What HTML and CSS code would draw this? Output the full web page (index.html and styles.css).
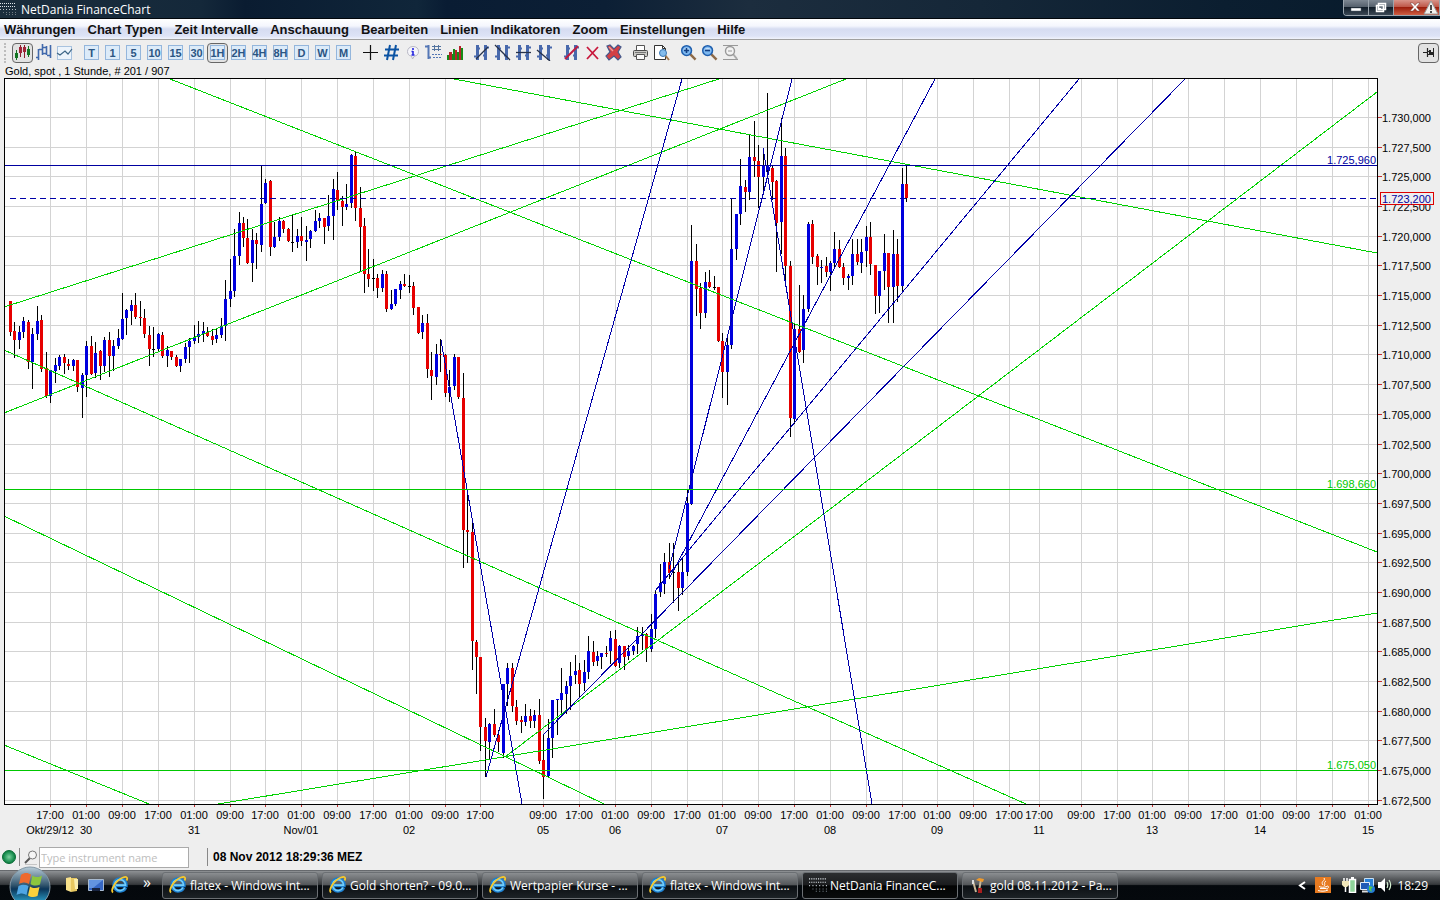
FILE: index.html
```html
<!DOCTYPE html>
<html lang="de">
  <head>
    <meta charset="UTF-8" />
    <meta name="viewport" content="width=device-width, initial-scale=1.0" />
    <title>NetDania FinanceChart</title>
    <link rel="stylesheet" href="styles.css">
  </head>
  <body>
    <!-- shared symbols -->
    <svg class="symbols" aria-hidden="true">
      <defs>
        <linearGradient id="orb-fill" x1="0" y1="0" x2="0" y2="1">
          <stop offset="0" stop-color="#b9cdd9" />
          <stop offset=".45" stop-color="#33566e" />
          <stop offset=".55" stop-color="#0b3558" />
          <stop offset="1" stop-color="#37c3ee" />
        </linearGradient>
        <radialGradient id="led-fill">
          <stop offset="0" stop-color="#7fd0a0" />
          <stop offset=".6" stop-color="#2f9f62" />
          <stop offset="1" stop-color="#08783c" />
        </radialGradient>
      </defs>
      <symbol id="dots" viewBox="0 0 16 14">
        <path d="M0 1.500h16M0 4.500h16" stroke="#dfe5ea" stroke-dasharray="1 1" />
        <path d="M0 7.500h16" stroke="#b8c0c6" stroke-dasharray="1 2" />
        <path d="M3 10.500h13M6 12.500h10" stroke="#707a82" stroke-dasharray="1 2" />
      </symbol>
      <symbol id="ie" viewBox="0 0 18 18">
        <path d="M14.500 11.500A6 6 0 1 1 15 8.500v1H5" fill="none" stroke="#1c7fcf" stroke-width="3.400" />
        <path d="M14 11.500A5.500 5.500 0 1 1 14.500 8.500v.6H5" fill="none" stroke="#74cdf8" stroke-width="1.600" />
        <path d="M2 16.500C-1 14 5 4 12 1.500c4-1.500 5 .5 3.500 3" fill="none" stroke="#f6c92c" stroke-width="1.800" />
      </symbol>
      <symbol id="lens" viewBox="0 0 18 18">
        <path d="M10.500 10.500l6 6" stroke="#8d6a48" stroke-width="2.600" />
        <circle cx="7" cy="7" r="5.200" fill="#7db8f0" stroke="#1f5fae" stroke-width="1.600" />
        <path d="M3.500 6a4 4 0 0 1 7 0z" fill="#c3e0fb" />
      </symbol>
      <symbol id="bars" viewBox="0 0 17 17">
        <path d="M4.500 1v15M12.500 1v15" stroke="#4869ac" stroke-width="3" />
        <path d="M1 12.500h4M4 4.500h3M10 11.500h3M12 3.500h4" stroke="#4869ac" stroke-width="2" />
      </symbol>
    </svg>

    <header class="titlebar">
      <svg class="title-icon"><use href="#dots" /></svg>
      <h1>NetDania FinanceChart</h1>
      <div class="window-buttons">
        <button aria-label="Minimieren"><svg viewBox="0 0 24 15"><path d="M7 8h10v3H7z" fill="#fff" stroke="#56616d" stroke-width=".5" /></svg></button>
        <button aria-label="Verkleinern"><svg viewBox="0 0 24 15"><path d="M9.500 3.500h7v6h-7zM7.500 5.500h7v6h-7z" fill="#69747f" stroke="#fff" stroke-width="1.500" /><path d="M10 8h2v1h-2z" fill="#fff" /></svg></button>
        <button class="close-but" aria-label="Schließen"><svg viewBox="0 0 45 15"><path d="M16 3h3l2 2.500L23 3h3l-3.500 4 3.500 4h-3l-2-2.500L19 11h-3l3.500-4z" fill="#fff" stroke="#6c3730" stroke-width=".5" /><path d="M37 1l7 13H30z" fill="#f3f1ee" stroke="#999" /><path d="M37 5v5M37 11v2" stroke="#222" stroke-width="1.600" /></svg></button>
      </div>
    </header>

    <nav class="menu">
      <a href="#">Währungen</a>
      <a href="#">Chart Typen</a>
      <a href="#">Zeit Intervalle</a>
      <a href="#">Anschauung</a>
      <a href="#">Bearbeiten</a>
      <a href="#">Linien</a>
      <a href="#">Indikatoren</a>
      <a href="#">Zoom</a>
      <a href="#">Einstellungen</a>
      <a href="#">Hilfe</a>
    </nav>

    <div class="toolbar">
      <span class="grip"></span>
      <div class="tool-group">
        <button class="tool pressed" aria-label="Kerzen"><svg viewBox="0 0 17 17"><path d="M2.500 6v10M14.500 2v11" stroke="#137422" /><path d="M6.500 1v12M10.500 1v13" stroke="#8a1c2d" /><path d="M1 9h3v5H1zM13 5h3v6h-3z" fill="#137422" /><path d="M5 3h3v6H5zM9 3h3v5H9z" fill="#a02337" /></svg></button>
        <button class="tool" aria-label="Balken"><svg viewBox="0 0 17 17"><path d="M3.500 5v11M7.500 0v11M11.500 2v9M15.500 1v13M1 13.500h3M4 5.500h4M7 3.500h5M8 9.500h4M12 11.500h4" stroke="#4169ac" stroke-width="1.600" fill="none" /></svg></button>
        <button class="tool" aria-label="Linie"><svg viewBox="0 0 17 17"><rect x="1.500" y="2.500" width="14" height="13" fill="#edf4fb" stroke="#a9c3df" /><path d="M1 9l3 2 5-4 3 3 4-5" stroke="#3d6686" fill="none" stroke-width="1.200" /></svg></button>
      </div>
      <div class="tool-group">
        <button class="tool"><span class="period">T</span></button>
        <button class="tool"><span class="period">1</span></button>
        <button class="tool"><span class="period">5</span></button>
        <button class="tool"><span class="period">10</span></button>
        <button class="tool"><span class="period">15</span></button>
        <button class="tool"><span class="period">30</span></button>
        <button class="tool pressed"><span class="period">1H</span></button>
        <button class="tool"><span class="period">2H</span></button>
        <button class="tool"><span class="period">4H</span></button>
        <button class="tool"><span class="period">8H</span></button>
        <button class="tool"><span class="period">D</span></button>
        <button class="tool"><span class="period">W</span></button>
        <button class="tool"><span class="period">M</span></button>
      </div>
      <div class="tool-group">
        <button class="tool" aria-label="Fadenkreuz"><svg viewBox="0 0 17 17"><path d="M8.500 1v15M1 8.500h15" stroke="#111" stroke-width="1.200" /></svg></button>
        <button class="tool" aria-label="Gitter"><svg viewBox="0 0 17 17"><path d="M7 1L4 16M13 1l-3 15M2 5.500h14M1 11.500h14" stroke="#0b53a3" stroke-width="2" /></svg></button>
        <button class="tool" aria-label="Info"><svg viewBox="0 0 17 17"><path d="M9 2.500c3.500 0 5.500 2 5.500 5s-2 4.500-4 4.500l-2 3-1-3c-2.500 0-4-2-4-4.500s2-5 5.500-5z" fill="#f5f5fa" stroke="#b8b8c4" /><path d="M9 4v2M9 7v4M7.500 7.500H9M7.500 11h3" stroke="#2929df" stroke-width="1.600" /></svg></button>
        <button class="tool" aria-label="Werte"><svg viewBox="0 0 17 17"><path d="M3.500 1v14M0 2.500h3M3 13.500h3" stroke="#5477b5" stroke-width="2" /><path d="M9.500 1v6M13.500 1v6M7 2.500h9M7 5.500h9" stroke="#52739f" /><path d="M7 10.500h10M8 13.500h9" stroke="#5477b5" stroke-dasharray="2 1" /></svg></button>
        <button class="tool" aria-label="Volumen"><svg viewBox="0 0 17 17"><path d="M1 11h2v5H1zM6 10h3v6H6zM11 8h2v8h-2zM15 4h2v12h-2z" fill="#168a16" /><path d="M3 8h3v8H3zM9 6h2v10H9zM13 2h2v14h-2z" fill="#b5242a" /><path d="M7 5h2v5H7z" fill="#168a16" /></svg></button>
      </div>
      <div class="tool-group">
        <button class="tool" aria-label="Trendlinie"><svg viewBox="0 0 17 17"><use href="#bars" /><path d="M3 15L15 3" stroke="#27324a" stroke-width="1.300" /></svg></button>
        <button class="tool" aria-label="Linie abwärts"><svg viewBox="0 0 17 17"><use href="#bars" /><path d="M1 1l15 15" stroke="#27324a" stroke-width="1.300" /></svg></button>
        <button class="tool" aria-label="Horizontale"><svg viewBox="0 0 17 17"><use href="#bars" /><path d="M1 8.500h15" stroke="#27324a" stroke-width="1.300" /></svg></button>
        <button class="tool" aria-label="Parallele"><svg viewBox="0 0 17 17"><use href="#bars" /><path d="M1 6l13 11" stroke="#27324a" stroke-width="1.300" /></svg></button>
      </div>
      <div class="tool-group">
        <button class="tool" aria-label="Linie entfernen"><svg viewBox="0 0 17 17"><use href="#bars" /><path d="M2 15L15 2" stroke="#c01c43" stroke-width="2" /></svg></button>
        <button class="tool" aria-label="Löschen"><svg viewBox="0 0 17 17"><path d="M3 3l11 12M14 3L3 15" stroke="#c8183c" stroke-width="1.800" /></svg></button>
        <button class="tool" aria-label="Alles löschen"><svg viewBox="0 0 17 17"><path d="M2 2l3-1 4 4 4-4 3 2-3 5 3 5-3 3-4-4-5 4-3-4 4-4z" fill="#d34045" stroke="#44598c" stroke-width="1.200" /><path d="M4 3l4 4" stroke="#f09a96" stroke-width="1.500" /></svg></button>
      </div>
      <div class="tool-group">
        <button class="tool" aria-label="Drucken"><svg viewBox="0 0 17 17"><path d="M4.500 7V1.500h8V7" fill="#fff" stroke="#555" /><rect x="1.500" y="6.500" width="14" height="6" rx="1" fill="#c9c9c5" stroke="#494949" /><path d="M4.500 10.500h8v5h-8z" fill="#fafafa" stroke="#555" /><path d="M3 8.500h11" stroke="#777" /></svg></button>
        <button class="tool" aria-label="Vorschau"><svg viewBox="0 0 17 17"><path d="M1.500 1.500h8l3 3v11h-11z" fill="#fff" stroke="#333" /><path d="M9.500 1.500v3h3" fill="none" stroke="#333" /><path d="M12 11l4 5" stroke="#a37a50" stroke-width="2" /><circle cx="10" cy="9" r="3.500" fill="#83bcec" stroke="#3c78b3" /></svg></button>
      </div>
      <div class="tool-group">
        <button class="tool" aria-label="Vergrößern"><svg viewBox="0 0 17 17"><use href="#lens" /><path d="M4 6.500h5M6.500 4v5" stroke="#123f82" stroke-width="1.600" /></svg></button>
        <button class="tool" aria-label="Verkleinern"><svg viewBox="0 0 17 17"><use href="#lens" /><path d="M4 6.500h5" stroke="#123f82" stroke-width="1.600" /></svg></button>
        <button class="tool" aria-label="Zoom zurücksetzen"><svg viewBox="0 0 17 17"><path d="M1 1.500h15M1 15.500h15" stroke="#999" /><path d="M11 10l4 5" stroke="#aaa" stroke-width="2" /><circle cx="8" cy="7" r="4.500" fill="#f3f3f3" stroke="#999" stroke-width="1.400" /><path d="M6 7h4" stroke="#999" /></svg></button>
      </div>
      <button class="tool pressed pin" aria-label="Anheften"><svg viewBox="0 0 17 17"><path d="M3 8.500h4M7.500 4v9M7 7.500h2M7 10.500h6" stroke="#222" stroke-width="1.200" /><path d="M9 6h2v5H9zM13 4h1v9h-1zM11 8h2v3h-2z" fill="#222" /></svg></button>
    </div>

    <main>
      <p class="instrument">Gold, spot , 1 Stunde, # 201 / 907</p>
      <svg class="chart" id="chart" viewBox="0 78 1440 764" role="img" aria-label="Gold, spot"></svg>
    </main>

    <div class="status">
      <svg class="led" viewBox="0 0 16 16"><circle cx="8" cy="8" r="6.500" fill="url(#led-fill)" stroke="#0c6e38" /></svg>
      <span class="divider"></span>
      <label for="instrument" aria-label="Instrument"><svg class="search-icon" viewBox="0 0 16 16"><path d="M7 9l-5 5" stroke="#555" stroke-width="2" /><circle cx="9.500" cy="6" r="4" fill="#f6f6f6" stroke="#777" /><path d="M2 15.500h12" stroke="#c5c5c5" /></svg></label>
      <input id="instrument" type="text" placeholder="Type instrument name" />
      <span class="divider clock-divider"></span>
      <span class="clock">08 Nov 2012 18:29:36 MEZ</span>
    </div>

    <footer class="taskbar">
      <button class="start" aria-label="Start">
        <svg viewBox="0 0 42 42">
          <circle cx="21" cy="21" r="20" fill="url(#orb-fill)" stroke="#8297a5" />
          <path d="M12 9c4-3 7-2 10-.5L20 18c-3-2-6-2-10 0z" fill="#ee6a2e" />
          <path d="M23.500 9.500c3 2 6 2 9.500 0l-2 9c-4 2-7 1-9.500-.5z" fill="#8cc63e" />
          <path d="M9.500 20c4-2 7-1.500 10 0l-2 9c-3-2-6-2-10 0z" fill="#4fa6e4" />
          <path d="M21 20.500c3 2 6 2 9.500 .5l-2 9c-4 2-7 1-9.500-.5z" fill="#fbd13c" />
        </svg>
      </button>
      <div class="quick">
        <button aria-label="Ordner"><svg viewBox="0 0 18 18"><path d="M3 2l5-1v15l-5-2z" fill="#f7e08a" /><path d="M8 2h6v13l-6 1z" fill="#e8c860" /><path d="M11 3h4v10h-3z" fill="#faeeb0" /></svg></button>
        <button aria-label="Desktop"><svg viewBox="0 0 18 18"><path d="M1.500 3.500h15v11h-15z" fill="#3667c5" stroke="#a8bad0" /><path d="M2 4h14L6 12H2z" fill="#6394e0" /><path d="M5 12h8v3H5z" fill="#172340" /></svg></button>
        <button aria-label="Internet Explorer"><svg><use href="#ie" /></svg></button>
        <button class="more">»</button>
      </div>
      <div class="tasks">
        <button class="task"><svg><use href="#ie" /></svg>flatex - Windows Int...</button>
        <button class="task"><svg><use href="#ie" /></svg>Gold shorten? - 09.0...</button>
        <button class="task"><svg><use href="#ie" /></svg>Wertpapier Kurse - ...</button>
        <button class="task"><svg><use href="#ie" /></svg>flatex - Windows Int...</button>
        <button class="task active"><svg><use href="#dots" /></svg>NetDania FinanceC...</button>
        <button class="task"><svg viewBox="0 0 18 18"><path d="M4 5l3 11M12 3l-2 12" stroke="#c9b697" stroke-width="2" /><path d="M7 4l3-2 5 1-1 3-4-1z" fill="#f09a2c" /><path d="M4 4v4" stroke="#ddd" stroke-width="2" /><path d="M9 12h4v5H9z" fill="#a81d1d" /></svg>gold 08.11.2012 - Pa...</button>
      </div>
      <div class="tray">
        <svg viewBox="0 0 16 16"><path d="M10 5L5 8.500l5 3.500" fill="none" stroke="#fff" stroke-width="2" /></svg>
        <svg class="java" viewBox="0 0 16 16"><path d="M0 0h16v16H0z" fill="#e77a20" /><path d="M9 1c2 3-4 3-1 7M11 4c-3 2 0 3-2 5M4 9.500c2 1 5 1 8 0M5 11.500h6M3 13.500c3 1 7 1 10-.5M12 9c3 0 1 3-1 3" fill="none" stroke="#fff" /></svg>
        <svg viewBox="0 0 16 16"><path d="M8.500 2.500h6v13h-6z" fill="#8fd49a" stroke="#fff" stroke-width="1.500" /><path d="M10 1h3" stroke="#fff" stroke-width="2" /><path d="M3 1v4M6 1v4M4.500 9v6" stroke="#fff" stroke-width="1.500" /><path d="M1 4h7v4l-2 2H3L1 8z" fill="#f0e6ba" /></svg>
        <svg viewBox="0 0 16 16"><path d="M5.500 1.500h9v8h-9z" fill="#2880d8" stroke="#c7dff2" /><path d="M1.500 5.500h9v7h-9z" fill="#1f5ab5" stroke="#e2edf7" /><path d="M3 14.500h6" stroke="#ddd" stroke-width="2" /><circle cx="12" cy="12" r="4" fill="#2379d5" /><path d="M10 9l4 1-2 2 1 3-3-2z" fill="#58c94b" /></svg>
        <svg viewBox="0 0 16 16"><path d="M1 5h3l4-4v14l-4-4H1z" fill="#fff" /><path d="M10 5c1 2 1 4 0 6M12 3c2 3 2 7 0 10" fill="none" stroke="#d4f0d2" stroke-width="1.200" /></svg>
        <time>18:29</time>
      </div>
    </footer>
    <script src="chart.js"></script>
  </body>
</html>
```
FILE: styles.css
```css
* {
  box-sizing: border-box;
}
body {
  margin: 0;
  min-height: 100vh;
  display: flex;
  flex-direction: column;
  background-color: #eeeeee;
  color: black;
  font-family: "Liberation Sans", Arial, sans-serif;
  font-size: 11px;
}
button {
  padding: 0;
  border: none;
  background: none;
  font-family: inherit;
}
svg {
  display: block;
}
.symbols {
  position: absolute;
  width: 0;
  height: 0;
}

/* title bar */
.titlebar {
  display: flex;
  align-items: center;
  height: 19px;
  background: linear-gradient(90deg, #1c2e3d 0, #14283a 14%, #0a1c31 17%, #10263a 29%, #091c33 31%, #0c1f35 42%, #1c2d3e 52%, #152738 68%, #0b1e30 85%, #071a2b 100%);
  border-bottom: 1px solid #02070c;
  color: white;
}
.titlebar h1 {
  flex: 1;
  margin: 0;
  font-family: "Open Sans", sans-serif;
  font-size: 12px;
  font-weight: normal;
}
.title-icon {
  width: 16px;
  height: 14px;
  margin-right: 5px;
}
.window-buttons {
  display: flex;
  align-self: flex-start;
  border: 1px solid #9ba5ae;
  border-top: none;
  border-radius: 0 0 0 4px;
  overflow: hidden;
}
.window-buttons button {
  width: 25px;
  height: 15px;
  background: linear-gradient(#7d8792 0, #56616d 45%, #111d29 50%, #3b4855 100%);
  border-right: 1px solid #9ba5ae;
}
.window-buttons .close-but {
  width: 45px;
  background: linear-gradient(#d89489 0, #bf5849 45%, #9d1f0d 50%, #cf5e43 100%);
  border: none;
}

/* menu */
.menu {
  display: flex;
  align-items: center;
  gap: 12px;
  height: 21px;
  padding: 0 4px;
  background: linear-gradient(#ffffff 0, #f4f6fd 35%, #d6dcf1 50%, #dde3f6 85%, #f1f3fb 100%);
  border-bottom: 1px solid #a0a0a0;
}
.menu a {
  color: #111;
  font-size: 13px;
  font-weight: bold;
  text-decoration: none;
}

/* toolbar */
.toolbar {
  display: flex;
  align-items: center;
  gap: 6px;
  height: 25px;
  padding: 0 1px 0 4px;
}
.grip {
  width: 1px;
  height: 20px;
  border-left: 2px dotted #bdbdbd;
}
.tool-group {
  display: flex;
}
.tool {
  display: flex;
  align-items: center;
  justify-content: center;
  width: 21px;
  height: 20px;
}
.tool svg {
  width: 17px;
  height: 17px;
}
.pressed {
  background-color: #e2e2e2;
  border: 1px solid #666;
  border-radius: 4px;
}
.period {
  width: 15px;
  height: 15px;
  display: flex;
  align-items: center;
  justify-content: center;
  background-color: #dcebf9;
  border: 1px solid #94b6dc;
  color: #2b5583;
  font-size: 11px;
  font-weight: bold;
}
.pin {
  margin-left: auto;
}

/* chart */
.instrument {
  margin: 0 5px;
  height: 13px;
  line-height: 13px;
}
.chart {
  width: 100%;
  height: auto;
  font-size: 11px;
}
.plot, .grid, .line, .candle, .level-line {
  shape-rendering: crispEdges;
}
.plot {
  fill: white;
}
.frame {
  fill: none;
  stroke: black;
  shape-rendering: crispEdges;
}
.grid {
  stroke: #d3d3d3;
}
.tick {
  stroke: #c03030;
  shape-rendering: crispEdges;
}
.line {
  fill: none;
}
.green {
  stroke: #00d200;
}
.blue {
  stroke: #0000a8;
}
.dashed {
  stroke-dasharray: 6 4;
}
.up {
  fill: #0000dd;
}
.down {
  fill: #e60000;
}
.wick {
  fill: black;
}
.time {
  text-anchor: middle;
}
.level {
  text-anchor: end;
}
.level-green {
  fill: #00c800;
}
.level-blue, .last-price {
  fill: #0000a0;
}
.last-box {
  fill: #eeeeee;
  stroke: #dd0000;
  shape-rendering: crispEdges;
}

/* status bar */
.status {
  display: flex;
  align-items: center;
  flex: 1;
  min-height: 28px;
  padding: 2px 1px 0;
}
.led {
  width: 16px;
  height: 16px;
  margin-right: 2px;
}
.divider {
  width: 1px;
  height: 18px;
  background-color: #888;
}
.search-icon {
  width: 16px;
  height: 16px;
  margin-left: 3px;
}
.status input {
  width: 150px;
  height: 21px;
  padding: 0 1px;
  border: 1px solid #aaa;
  background-color: white;
  font-family: "Open Sans", Tahoma, sans-serif;
  font-size: 11px;
}
.status input::placeholder {
  color: #bdbdbd;
}
.clock-divider {
  margin: 0 5px 0 18px;
}
.clock {
  font-size: 12px;
  font-weight: bold;
}

/* taskbar */
.taskbar {
  display: flex;
  align-items: center;
  height: 30px;
  padding: 0 12px 0 9px;
  background: linear-gradient(#55585c 0, #8a8d90 5%, #56595c 30%, #36393c 48%, #04080c 52%, #05090d 100%);
  color: white;
  font-family: "Open Sans", sans-serif;
  font-size: 12px;
}
.start {
  width: 42px;
  height: 34px;
  margin-top: -4px;
  overflow: hidden;
}
.start svg {
  width: 42px;
  height: 42px;
}
.quick {
  display: flex;
  align-items: center;
  gap: 6px;
  width: 111px;
  padding-left: 12px;
}
.quick svg, .task svg {
  width: 18px;
  height: 18px;
}
.more {
  align-self: flex-start;
  margin-left: 8px;
  color: white;
  font-size: 16px;
  line-height: 12px;
}
.tasks {
  display: flex;
  flex: 1;
  gap: 4px;
}
.task {
  display: flex;
  align-items: center;
  gap: 3px;
  flex: 0 1 156px;
  height: 27px;
  padding: 0 6px;
  overflow: hidden;
  white-space: nowrap;
  background: linear-gradient(#8b8e91 0, #55585b 46%, #0c1014 52%, #1c2226 100%);
  border: 1px solid #6b6f73;
  border-radius: 3px;
  color: white;
  font-size: 12px;
}
.task svg {
  flex: none;
}
.active {
  background: linear-gradient(#2c2e30 0, #1b1c1e 46%, #020303 52%, #090b0c 100%);
}
.tray {
  display: flex;
  align-items: center;
  gap: 2px;
}
.tray svg {
  width: 16px;
  height: 16px;
}
.tray .java {
  margin: 0 8px 0 2px;
}
.tray time {
  margin-left: 2px;
}
```
FILE: chart.js
```js
const chart = document.getElementById('chart');
const LEFT = 4, RIGHT = 1377, TOP = 78, BOTTOM = 804;

// wick top, body top, body bottom, wick bottom, u = up / d = down / n = unchanged
const candles = `
301 301 332 336 d,322 331 340 358 d,326 332 340 349 u,317 321 332 338 u,320 322 362 369 d,
328 334 362 389 u,306 321 334 340 u,315 320 369 372 d,352 368 396 398 d,370 370 396 403 u,
358 365 371 383 u,355 357 366 370 u,354 357 363 374 d,359 364 366 370 d,359 360 366 371 u,
360 360 387 392 d,373 375 388 418 u,341 346 375 397 u,336 346 374 375 d,342 353 373 378 u,
350 351 366 380 d,337 340 366 372 u,332 340 356 377 d,340 346 356 371 u,329 338 346 349 u,
293 319 339 340 u,309 310 318 335 u,300 305 311 325 u,293 305 317 319 d,301 317 318 326 d,
309 318 334 338 d,326 335 349 366 d,327 349 350 357 n,333 334 349 352 u,332 335 356 358 d,
346 350 356 367 u,351 351 357 360 d,355 357 366 367 d,359 359 366 372 u,343 347 359 363 u,
338 341 347 363 u,325 338 341 344 u,321 334 337 343 u,322 331 334 342 u,327 332 336 337 d,
329 336 340 345 d,329 335 339 343 u,318 326 335 338 u,280 299 326 341 u,259 291 299 307 u,
229 256 291 297 u,212 223 256 265 u,217 223 238 247 d,219 238 263 264 d,229 240 263 282 u,
233 240 244 269 d,166 204 245 252 u,179 183 203 204 u,180 181 247 256 d,222 237 247 248 u,
217 221 237 241 u,220 221 229 233 d,228 229 241 242 d,214 242 243 252 n,229 236 242 248 u,
217 236 241 246 d,226 240 242 261 u,230 231 239 248 u,210 221 231 232 u,213 218 221 228 u,
218 218 227 244 d,195 216 226 231 u,179 189 216 240 u,172 190 201 210 d,196 201 207 226 d,
184 204 207 210 u,154 155 203 208 u,152 156 208 221 d,187 208 227 271 d,218 226 274 293 d,
249 274 279 287 d,259 278 279 291 n,274 278 288 298 d,270 274 288 292 u,271 274 309 312 d,
290 304 309 310 u,289 289 304 306 u,281 284 290 299 u,274 284 286 287 d,275 286 287 293 n,
282 286 308 315 d,307 307 333 334 d,315 323 332 339 u,314 323 369 378 d,352 370 376 400 d,
344 354 377 385 u,339 354 355 372 d,354 355 393 397 d,370 387 393 402 u,354 357 386 390 u,
357 357 397 399 d,373 398 530 568 d,490 530 532 563 d,519 532 641 670 d,640 642 657 694 d,
657 657 727 751 d,718 727 741 777 d,723 724 742 760 u,709 724 735 737 d,730 735 742 752 d,
684 684 753 758 u,663 668 684 706 u,663 668 706 712 d,700 707 721 725 d,716 720 722 733 d,
704 716 722 726 u,709 716 721 728 d,710 715 721 728 u,699 715 761 764 d,734 760 777 799 d,
719 738 776 777 u,700 700 738 758 u,699 699 700 735 u,668 693 700 713 u,681 686 694 714 u,
662 676 686 710 u,655 671 675 684 u,663 670 684 697 d,660 672 683 691 u,636 651 672 679 u,
641 652 662 666 d,651 656 661 666 u,653 653 657 669 u,646 653 654 657 d,631 638 651 664 u,
630 639 666 667 d,645 646 663 668 u,646 646 657 670 d,645 651 656 660 u,645 646 651 655 u,
627 636 644 654 u,627 635 636 650 u,633 634 649 662 d,614 629 649 652 u,590 594 629 638 u,
564 583 592 597 u,553 562 584 594 u,543 562 573 579 d,543 572 573 603 n,562 572 588 611 d,
558 572 588 595 u,490 503 572 576 u,225 261 504 505 u,244 261 289 316 d,283 288 313 329 d,
272 282 313 318 u,270 282 287 288 d,276 287 288 290 n,287 287 341 342 d,333 341 372 398 d,
338 345 372 405 u,199 249 345 349 u,214 214 249 260 u,159 186 214 225 u,180 187 192 212 d,
135 157 192 200 u,121 157 161 177 d,145 161 177 208 d,148 165 177 190 u,93 165 170 174 u,
166 168 182 200 d,180 181 223 272 d,118 156 222 254 u,148 156 266 284 d,261 266 418 437 d,
323 329 419 424 u,285 329 352 353 d,295 309 350 363 u,222 224 309 312 u,220 224 257 264 d,
254 256 267 285 d,260 267 268 283 u,257 266 272 277 d,261 263 272 291 u,232 249 263 267 u,
240 249 267 268 d,263 267 278 285 d,274 276 278 290 u,239 254 276 285 u,239 254 262 265 d,
239 252 263 273 u,226 237 251 267 u,222 237 264 275 d,265 265 296 314 d,271 271 296 313 u,
234 253 271 290 u,253 253 287 323 d,230 254 287 323 u,239 254 286 302 d,168 184 286 293 u,
166 184 198 202 d`.trim().split(',');

const times = [
  [50, '17:00', 'Okt/29/12'], [86, '01:00', '30'], [122, '09:00'], [158, '17:00'],
  [194, '01:00', '31'], [230, '09:00'], [265, '17:00'], [301, '01:00', 'Nov/01'],
  [337, '09:00'], [373, '17:00'], [409, '01:00', '02'], [445, '09:00'], [480, '17:00'],
  [543, '09:00', '05'], [579, '17:00'], [615, '01:00', '06'], [651, '09:00'],
  [687, '17:00'], [722, '01:00', '07'], [758, '09:00'], [794, '17:00'],
  [830, '01:00', '08'], [866, '09:00'], [902, '17:00'], [937, '01:00', '09'],
  [973, '09:00'], [1009, '17:00'], [1039, '17:00', '11'], [1081, '09:00'],
  [1117, '17:00'], [1152, '01:00', '13'], [1188, '09:00'], [1224, '17:00'],
  [1260, '01:00', '14'], [1296, '09:00'], [1332, '17:00'], [1368, '01:00', '15']
];

const trendLines = [
  ['green', 4, 307, 722, 78], ['green', 4, 413, 846, 79], ['green', 170, 79, 1377, 552],
  ['green', 454, 79, 1377, 253], ['green', 4, 350, 1026, 804], ['green', 4, 516, 604, 804],
  ['green', 4, 745, 149, 804], ['green', 218, 804, 1377, 613], ['green', 505, 757, 1377, 92],
  ['blue', 441, 340, 522, 804], ['blue', 486, 777, 682, 79], ['blue', 669, 569, 792, 79],
  ['blue', 670, 577, 935, 79], ['blue', 655, 591, 1079, 79], ['blue', 543, 735, 1185, 79],
  ['blue', 763, 148, 872, 804]
];

const levels = [['blue', 1725.96], ['green', 1698.66], ['green', 1675.05]];

function add(tag, className, attrs, text) {
  const el = document.createElementNS('http://www.w3.org/2000/svg', tag);
  el.setAttribute('class', className);
  for (const key in attrs) el.setAttribute(key, attrs[key]);
  if (text) el.textContent = text;
  chart.appendChild(el);
}

function line(className, x1, y1, x2, y2) {
  add('line', className, { x1, y1, x2, y2 });
}

function priceY(price) {
  return Math.floor(117.4 + (1730 - price) * 11.878) + 0.5;
}

// 1725.96 -> 1.725,960
function priceText(price) {
  return price.toFixed(3).replace('.', ',').replace(/^1/, '1.');
}

function drawGrid() {
  add('rect', 'plot', { x: LEFT, y: TOP, width: RIGHT - LEFT, height: BOTTOM - TOP });
  for (let price = 1730; price >= 1672.5; price -= 2.5) {
    const y = priceY(price);
    line('grid', LEFT, y, RIGHT, y);
    line('tick', RIGHT + 1, y, RIGHT + 5, y);
    add('text', 'price', { x: 1382, y: y + 4 }, priceText(price));
  }
  times.forEach(([x, time, date]) => {
    line('grid', x + 0.5, TOP, x + 0.5, BOTTOM);
    line('tick', x + 0.5, BOTTOM + 1, x + 0.5, BOTTOM + 3);
    add('text', 'time', { x, y: 819 }, time);
    if (date) add('text', 'time', { x, y: 834 }, date);
  });
}

function drawCandles() {
  candles.forEach((row, i) => {
    const [high, top, bottom, low, type] = row.trim().split(' ');
    const x = Math.floor(10.49 + i * 4.481);
    const body = { u: 'up', d: 'down', n: 'wick' }[type];
    add('rect', 'candle wick', { x, y: high, width: 1, height: low - high });
    add('rect', 'candle ' + body, { x: x - 1, y: top, width: 3, height: bottom - top });
  });
}

function drawLines() {
  trendLines.forEach(([color, ...points]) => line('line ' + color, ...points));
  levels.forEach(([color, price]) => {
    const y = Math.floor(priceY(price));
    add('rect', 'level-line level-' + color, { x: LEFT, y, width: RIGHT - LEFT, height: 1 });
    add('text', 'level level-' + color, { x: 1376, y: y - 1 }, priceText(price));
  });
}

function drawLastPrice() {
  const y = priceY(1723.2);
  line('line blue dashed', 10, y, RIGHT, y);
  add('rect', 'last-box', { x: 1380.5, y: y - 6, width: 53, height: 12 });
  add('text', 'last-price', { x: 1382, y: y + 4 }, priceText(1723.2));
}

drawGrid();
drawCandles();
drawLines();
drawLastPrice();
add('rect', 'frame', { x: LEFT + 0.5, y: TOP + 0.5, width: RIGHT - LEFT, height: BOTTOM - TOP });
```
